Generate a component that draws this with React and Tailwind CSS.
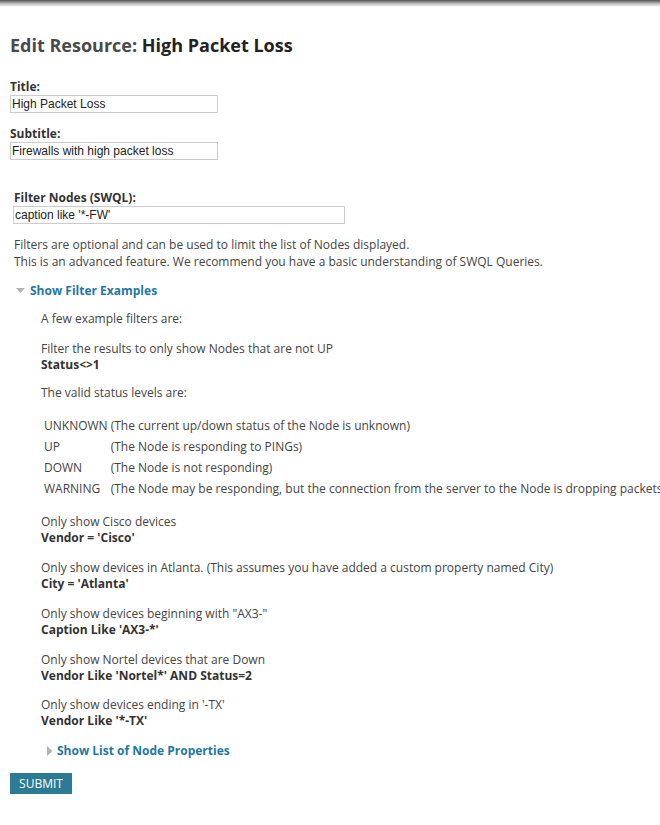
import React from "react";

const font = { fontFamily: '"Open Sans", "Noto Sans", sans-serif' };

function Example({ desc, code, className = "" }) {
  return (
    <div className={"leading-[16px] " + className}>
      <div>{desc}</div>
      <div className="font-bold text-[#333]">{code}</div>
    </div>
  );
}

function Tri({ dir }) {
  if (dir === "down")
    return (
      <svg width="9" height="6" viewBox="0 0 9 6" className="shrink-0">
        <path d="M0 0 L9 0 L4.5 5 Z" fill="#b3b3b3" />
      </svg>
    );
  return (
    <svg width="6" height="10" viewBox="0 0 6 10" className="shrink-0">
      <path d="M0 0 L5.5 5 L0 10 Z" fill="#b3b3b3" />
    </svg>
  );
}

export default function App() {
  const levels = [
    ["UNKNOWN", "(The current up/down status of the Node is unknown)"],
    ["UP", "(The Node is responding to PINGs)"],
    ["DOWN", "(The Node is not responding)"],
    ["WARNING", "(The Node may be responding, but the connection from the server to the Node is dropping packets)"],
  ];
  const inputFont = { fontFamily: '"Liberation Sans", Arial, sans-serif' };
  return (
    <div className="w-[660px] h-[825px] overflow-hidden bg-white text-[12px] text-[#444]" style={font}>
      <div className="h-[7px] bg-gradient-to-b from-[#555] via-[#bbb] to-white" />
      <div className="pl-[10px]">
        <h1 className="mt-[26px] text-[18px] leading-[24px] font-bold text-[#4a4a4a]">
          Edit Resource: <span className="font-bold text-[#222]">High Packet Loss</span>
        </h1>

        <div className="mt-[22px] font-bold text-[#333] leading-[16px]">Title:</div>
        <input
          readOnly
          value="High Packet Loss"
          className="block w-[208px] h-[18px] border border-[#ccc] px-[1px] text-[12px] text-[#222] outline-none"
          style={inputFont}
        />

        <div className="mt-[13px] font-bold text-[#333] leading-[16px]">Subtitle:</div>
        <input
          readOnly
          value="Firewalls with high packet loss"
          className="block w-[208px] h-[18px] border border-[#ccc] px-[1px] text-[12px] text-[#222] outline-none"
          style={inputFont}
        />

        <div className="pl-[3px] mt-[30px]">
          <div className="font-bold text-[#333] leading-[16px] pl-[1px]">Filter Nodes (SWQL):</div>
          <input
            readOnly
            value="caption like '*-FW'"
            className="block w-[332px] h-[18px] border border-[#ccc] px-[1px] text-[12px] text-[#222] outline-none"
            style={inputFont}
          />
          <div className="mt-[12px] leading-[17px] pl-[1px]">
            <div>Filters are optional and can be used to limit the list of Nodes displayed.</div>
            <div className="whitespace-nowrap">This is an advanced feature. We recommend you have a basic understanding of SWQL Queries.</div>
          </div>
        </div>

        <div className="mt-[13px] flex items-center gap-[5px] pl-[6px] leading-[16px]">
          <Tri dir="down" />
          <span className="font-bold text-[#1f77a6]">Show Filter Examples</span>
        </div>

        <div className="pl-[31px] mt-[12px] whitespace-nowrap">
          <div className="leading-[16px]">A few example filters are:</div>
          <Example className="mt-[14px]" desc="Filter the results to only show Nodes that are not UP" code="Status<>1" />
          <div className="mt-[12px] leading-[16px]">The valid status levels are:</div>
          <table className="mt-[14px] border-separate border-spacing-0 ml-[1px]">
            <tbody>
              {levels.map(([a, b]) => (
                <tr key={a} className="h-[21px]">
                  <td className="pl-[2px] pr-[3px] align-middle">{a}</td>
                  <td className="align-middle">{b}</td>
                </tr>
              ))}
            </tbody>
          </table>
          <Example className="mt-[15px]" desc="Only show Cisco devices" code="Vendor = 'Cisco'" />
          <Example className="mt-[14px]" desc="Only show devices in Atlanta. (This assumes you have added a custom property named City)" code="City = 'Atlanta'" />
          <Example className="mt-[14px]" desc={'Only show devices beginning with "AX3-"'} code="Caption Like 'AX3-*'" />
          <Example className="mt-[14px]" desc="Only show Nortel devices that are Down" code="Vendor Like 'Nortel*' AND Status=2" />
          <Example className="mt-[13px]" desc="Only show devices ending in '-TX'" code="Vendor Like '*-TX'" />
          <div className="mt-[14px] flex items-center gap-[4px] pl-[6px] leading-[16px]">
            <Tri dir="right" />
            <span className="font-bold text-[#1f77a6]">Show List of Node Properties</span>
          </div>
        </div>

        <button className="mt-[14px] block w-[62px] h-[21px] bg-[#2b7b95] text-white text-[12px] leading-[21px] text-center">
          SUBMIT
        </button>
      </div>
    </div>
  );
}
